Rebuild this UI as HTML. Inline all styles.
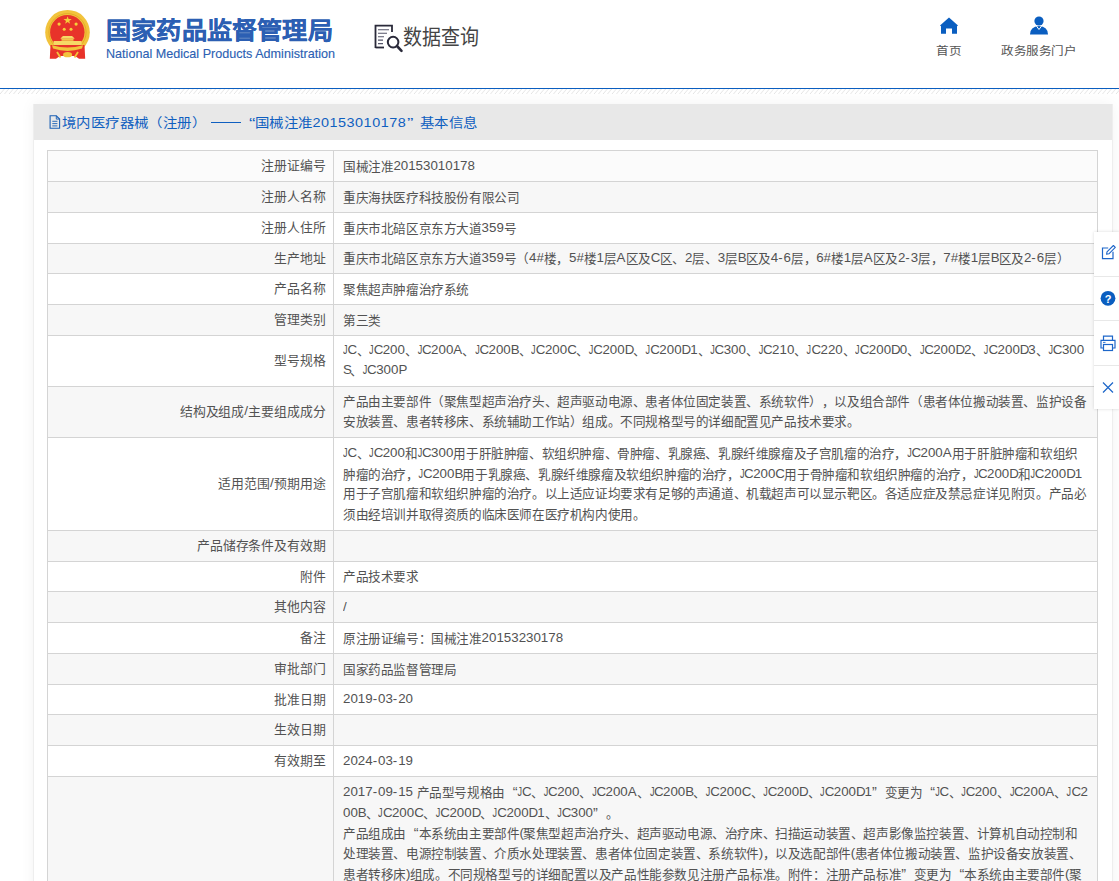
<!DOCTYPE html>
<html lang="zh-CN"><head><meta charset="utf-8">
<style>
*{box-sizing:border-box;margin:0;padding:0}
html,body{text-spacing-trim:space-all;width:1119px;height:881px;overflow:hidden;background:#fff;font-family:"Liberation Sans",sans-serif;color:#333;position:relative}
.emb{position:absolute;left:40px;top:5px;width:60px;height:60px}
.t1{position:absolute;left:106px;top:16.6px;font-size:28px;transform:scale(0.9,0.846);transform-origin:left top;font-weight:700;-webkit-text-stroke:0.3px #2c5fb3;color:#2c5fb3;line-height:34px;white-space:nowrap}
.t2{position:absolute;left:106px;-webkit-text-stroke:0.15px #2c5fb3;top:46px;font-size:14px;transform:scale(0.9);transform-origin:left top;color:#2c5fb3;line-height:16px;white-space:nowrap}
.sq{position:absolute;left:370px;top:18px;width:40px;height:40px}
.sqt{position:absolute;left:403px;top:20.6px;font-size:19px;transform:scaleY(1.1);transform-origin:left center;color:#444;line-height:32px;white-space:nowrap}
.nav{position:absolute;top:41px;text-align:left;font-size:14px;transform:scale(0.9,0.81);transform-origin:left top;color:#555;line-height:18px;white-space:nowrap}
.navi{position:absolute;top:14px}
.line{position:absolute;left:0;top:88px;width:1119px;height:1.2px;background:#0a5ec0}
.hatch{position:absolute;left:0;top:89px}
.box{position:absolute;left:33px;top:104px;width:1080px;height:800px;background:#fff;box-shadow:0 0 14px rgba(0,0,0,0.05);border-left:1px solid #eee;border-right:1px solid #eee}
.bar{position:absolute;left:0;top:0;width:100%;height:35.5px;background:#e8e8e8;color:#0f5fc0;font-size:13px;line-height:35px;padding-left:15px;white-space:nowrap}
.bt{position:absolute;top:1.3px;font-size:16px;line-height:35px;transform:scale(0.9,0.8);transform-origin:left center}
.dash{position:absolute;left:177px;top:18px;width:30px;height:1px;background:#0f5fc0}
.tbl{position:absolute;left:0;top:0;width:1119px;height:881px}
.r{position:absolute;left:47px;width:1051px;border:1px solid #d4d4d4;border-bottom:0;display:flex;align-items:center;font-size:14px;color:#525252;line-height:22.67px}
.lb{width:286px;flex-shrink:0;text-align:right;padding-right:9px;white-space:nowrap;transform:scale(0.92,0.9);transform-origin:right center;position:relative;top:-1px}
.vl{margin-left:8.5px;position:relative;top:-0.45px;white-space:nowrap;transform:scale(0.9);transform-origin:left center}
.vline{position:absolute;left:333px;top:150px;width:1px;height:731px;background:#d4d4d4}
.tool{position:absolute;left:1094px;top:232px;width:26px;height:177px;background:#fff;box-shadow:0 0 3px rgba(0,0,0,0.15)}
.tb{height:44px;border-bottom:1px solid #e8e8e8;position:relative}
.tb.last{border-bottom:0}
.tb svg{position:absolute;left:0;top:0}
.L{font-size:14.8px;vertical-align:1.1px;line-height:1px}
i{font-style:normal}
.qo,.qc{display:inline-block;width:14px;font-weight:normal;font-size:16px;line-height:10px}
.qo{text-align:right}
.qc{text-align:left}
.j{display:inline-block;transform:scaleX(0.68);transform-origin:left center;margin-right:-2.45px}

</style></head><body>
<svg class="emb" viewBox="0 0 60 60" width="60" height="60">
 <circle cx="27.5" cy="27.2" r="22.3" fill="#f2c33c"/>
 <circle cx="27.5" cy="27.2" r="18.6" fill="none" stroke="#e0a523" stroke-width="0.8"/>
 <circle cx="27.3" cy="27.2" r="17.2" fill="#e8332a"/>
 <polygon points="27.6,11.2 28.6,14.1 31.7,14.1 29.2,15.9 30.1,18.8 27.6,17 25.1,18.8 26,15.9 23.5,14.1 26.6,14.1" fill="#f4d03a"/>
 <circle cx="19.1" cy="19.1" r="1.6" fill="#f4d03a"/><circle cx="36.1" cy="19.1" r="1.6" fill="#f4d03a"/>
 <circle cx="24.2" cy="24.2" r="1.5" fill="#f4d03a"/><circle cx="31" cy="24.2" r="1.5" fill="#f4d03a"/>
 <path d="M20.4 33.8 Q22 31.5 23 31 H32 Q33 31.5 34.7 33.8 Z" fill="#f6d866"/>
 <rect x="21.5" y="33.8" width="12" height="2" fill="#f0c64a"/>
 <rect x="13.6" y="36" width="28" height="4.2" fill="#f6d866"/>
 <path d="M10.5 40 L9.8 53.8 H16 L20 51 H35 L39 53.8 H45.2 L44.5 40 Z" fill="#e8332a"/>
 <path d="M12 40.2 Q27.5 45 43 40.2 L42 43.6 Q27.5 48.5 13 43.6 Z" fill="#f2c33c"/>
 <path d="M17 47 L20.5 52.5 M38 47 L34.5 52.5" stroke="#f2c33c" stroke-width="1.8"/>
 <ellipse cx="27.6" cy="49.7" rx="4.5" ry="2.6" fill="#f2c33c"/>
</svg>
<div class="t1">国家药品监督管理局</div>
<div class="t2">National Medical Products Administration</div>
<svg class="sq" viewBox="0 0 40 40" width="40" height="40">
 <path d="M5.5 30 V7.7 H22 V14" fill="none" stroke="#2a2a3a" stroke-width="1.8"/>
 <path d="M5.5 29.5 H14" fill="none" stroke="#2a2a3a" stroke-width="1.8"/>
 <path d="M8 11.8 H19 M8 15.2 H17 M8 18.7 H14 M8 22.1 H13 M8 25.6 H13" stroke="#55556a" stroke-width="1.1"/>
 <circle cx="23.1" cy="24.1" r="5.3" fill="none" stroke="#2a2a3a" stroke-width="2"/>
 <path d="M27 28 L31.5 32.8" stroke="#2a2a3a" stroke-width="2.6" stroke-linecap="round"/>
</svg>
<div class="sqt">数据查询</div>
<svg class="navi" style="left:938px" width="22" height="22" viewBox="0 0 22 22">
 <path d="M2 11.5 L11 3.5 L20 11.5 L19 12.2 V19.7 H14 V14.5 H8 V19.7 H3 V12.2 Z" fill="#0a5ec0"/>
</svg>
<div class="nav" style="left:936px;top:43.6px">首页</div>
<svg class="navi" style="left:1028px" width="22" height="22" viewBox="0 0 22 22">
 <circle cx="11" cy="7" r="4.6" fill="#0a5ec0"/>
 <path d="M2 20.6 Q2 12.5 11 12 Q20 12.5 20 20.6 Z" fill="#0a5ec0"/>
 <path d="M8.5 12.2 L11 15.5 L13.5 12.2" fill="none" stroke="#fff" stroke-width="1"/>
</svg>
<div class="nav" style="left:1001px;top:43.6px">政务服务门户</div>
<div class="line"></div>
<svg class="hatch" width="1119" height="6" viewBox="0 0 1119 6"><defs><pattern id="hp" width="4.5" height="6" patternUnits="userSpaceOnUse"><path d="M0 5 L4.2 0" stroke="#d6d6d6" stroke-width="0.7"/><path d="M4.5 5 L8.7 0" stroke="#d6d6d6" stroke-width="0.7"/><path d="M-4.5 5 L-0.3 0" stroke="#d6d6d6" stroke-width="0.7"/></pattern></defs><rect width="1119" height="6" fill="url(#hp)"/></svg>
<div class="box">
 <div class="bar"><svg style="position:absolute;left:15px;top:11px" width="12" height="14" viewBox="0 0 12 14"><path d="M1.1 0.8 H7.3 L10.6 4.1 V13.2 H1.1 Z" fill="none" stroke="#1a5fb4" stroke-width="1.1"/><path d="M7.3 0.8 V4.1 H10.6" fill="none" stroke="#1a5fb4" stroke-width="0.9"/><path d="M3.3 6.3 H8.4 M3.3 8.6 H8.4 M3.3 10.9 H8.4" stroke="#1a5fb4" stroke-width="0.9"/></svg><span class="bt" style="left:28px">境内医疗器械（注册）</span><span class="dash"></span><span class="bt" style="left:214.5px;transform:scale(1.2,0.8)">“</span><span class="bt" style="left:220.5px">国械注准<span style="letter-spacing:0.55px">20153010178</span></span><span class="bt" style="left:373px;transform:scale(1.2,0.8)">”</span><span class="bt" style="left:386px">基本信息</span></div>
</div>

<div class="tbl">
<div class="r" style="top:150px;height:32px;background:#fbfbfb"><div class="lb">注册证编号</div><div class="vl"><span class="ln">国械注准<span class="L">20153010178</span></span></div></div>
<div class="r" style="top:181px;height:32px;background:#f7f7f7"><div class="lb">注册人名称</div><div class="vl"><span class="ln">重庆海扶医疗科技股份有限公司</span></div></div>
<div class="r" style="top:212px;height:32px;background:#fff"><div class="lb">注册人住所</div><div class="vl"><span class="ln">重庆市北碚区京东方大道<span class="L">359</span>号</span></div></div>
<div class="r" style="top:243px;height:31px;background:#f7f7f7"><div class="lb">生产地址</div><div class="vl"><span class="ln">重庆市北碚区京东方大道<span class="L">359</span>号（<span class="L">4#</span>楼，<span class="L">5#</span>楼<span class="L">1</span>层<span class="L"><i style="letter-spacing:0.2px">A</i></span>区及<span class="L"><i style="letter-spacing:-0.6px">C</i></span>区、<span class="L">2</span>层、<span class="L">3</span>层<span class="L"><i style="letter-spacing:-1.0px">B</i></span>区及<span class="L">4<i style="letter-spacing:1.0px">-</i>6</span>层，<span class="L">6#</span>楼<span class="L">1</span>层<span class="L"><i style="letter-spacing:0.2px">A</i></span>区及<span class="L">2<i style="letter-spacing:1.0px">-</i>3</span>层，<span class="L">7#</span>楼<span class="L">1</span>层<span class="L"><i style="letter-spacing:-1.0px">B</i></span>区及<span class="L">2<i style="letter-spacing:1.0px">-</i>6</span>层）</span></div></div>
<div class="r" style="top:273px;height:32px;background:#fff"><div class="lb">产品名称</div><div class="vl"><span class="ln">聚焦超声肿瘤治疗系统</span></div></div>
<div class="r" style="top:304px;height:32px;background:#f7f7f7"><div class="lb">管理类别</div><div class="vl"><span class="ln">第三类</span></div></div>
<div class="r" style="top:335px;height:52px;background:#fff"><div class="lb">型号规格</div><div class="vl"><span class="ln"><span class="L"><i class="j">J</i><i style="letter-spacing:-0.6px">C</i></span>、<span class="L"><i class="j">J</i><i style="letter-spacing:-0.6px">C</i>200</span>、<span class="L"><i class="j">J</i><i style="letter-spacing:-0.6px">C</i>200<i style="letter-spacing:0.2px">A</i></span>、<span class="L"><i class="j">J</i><i style="letter-spacing:-0.6px">C</i>200<i style="letter-spacing:-1.0px">B</i></span>、<span class="L"><i class="j">J</i><i style="letter-spacing:-0.6px">C</i>200<i style="letter-spacing:-0.6px">C</i></span>、<span class="L"><i class="j">J</i><i style="letter-spacing:-0.6px">C</i>200<i style="letter-spacing:-1.2px">D</i></span>、<span class="L"><i class="j">J</i><i style="letter-spacing:-0.6px">C</i>200<i style="letter-spacing:-1.2px">D</i>1</span>、<span class="L"><i class="j">J</i><i style="letter-spacing:-0.6px">C</i>300</span>、<span class="L"><i class="j">J</i><i style="letter-spacing:-0.6px">C</i>210</span>、<span class="L"><i class="j">J</i><i style="letter-spacing:-0.6px">C</i>220</span>、<span class="L"><i class="j">J</i><i style="letter-spacing:-0.6px">C</i>200<i style="letter-spacing:-1.2px">D</i>0</span>、<span class="L"><i class="j">J</i><i style="letter-spacing:-0.6px">C</i>200<i style="letter-spacing:-1.2px">D</i>2</span>、<span class="L"><i class="j">J</i><i style="letter-spacing:-0.6px">C</i>200<i style="letter-spacing:-1.2px">D</i>3</span>、<span class="L"><i class="j">J</i><i style="letter-spacing:-0.6px">C</i>300</span></span><br><span class="ln"><span class="L"><i style="letter-spacing:-2.1px">S</i></span>、<span class="L"><i class="j">J</i><i style="letter-spacing:-0.6px">C</i>300<i style="letter-spacing:-1.7px">P</i></span></span></div></div>
<div class="r" style="top:386px;height:52px;background:#f7f7f7"><div class="lb">结构及组成<span class="L"><i style="letter-spacing:0.5px">/</i></span>主要组成成分</div><div class="vl"><span class="ln">产品由主要部件（聚焦型超声治疗头、超声驱动电源、患者体位固定装置、系统软件），以及组合部件（患者体位搬动装置、监护设备</span><br><span class="ln">安放装置、患者转移床、系统辅助工作站）组成。不同规格型号的详细配置见产品技术要求。</span></div></div>
<div class="r" style="top:437px;height:94px;background:#fff"><div class="lb">适用范围<span class="L"><i style="letter-spacing:0.5px">/</i></span>预期用途</div><div class="vl"><span class="ln"><span class="L"><i class="j">J</i><i style="letter-spacing:-0.6px">C</i></span>、<span class="L"><i class="j">J</i><i style="letter-spacing:-0.6px">C</i>200</span>和<span class="L"><i class="j">J</i><i style="letter-spacing:-0.6px">C</i>300</span>用于肝脏肿瘤、软组织肿瘤、骨肿瘤、乳腺癌、乳腺纤维腺瘤及子宫肌瘤的治疗，<span class="L"><i class="j">J</i><i style="letter-spacing:-0.6px">C</i>200<i style="letter-spacing:0.2px">A</i></span>用于肝脏肿瘤和软组织</span><br><span class="ln">肿瘤的治疗，<span class="L"><i class="j">J</i><i style="letter-spacing:-0.6px">C</i>200<i style="letter-spacing:-1.0px">B</i></span>用于乳腺癌、乳腺纤维腺瘤及软组织肿瘤的治疗，<span class="L"><i class="j">J</i><i style="letter-spacing:-0.6px">C</i>200<i style="letter-spacing:-0.6px">C</i></span>用于骨肿瘤和软组织肿瘤的治疗，<span class="L"><i class="j">J</i><i style="letter-spacing:-0.6px">C</i>200<i style="letter-spacing:-1.2px">D</i></span>和<span class="L"><i class="j">J</i><i style="letter-spacing:-0.6px">C</i>200<i style="letter-spacing:-1.2px">D</i>1</span></span><br><span class="ln">用于子宫肌瘤和软组织肿瘤的治疗。以上适应证均要求有足够的声通道、机载超声可以显示靶区。各适应症及禁忌症详见附页。产品必</span><br><span class="ln">须由经培训并取得资质的临床医师在医疗机构内使用。</span></div></div>
<div class="r" style="top:530px;height:32px;background:#f7f7f7"><div class="lb">产品储存条件及有效期</div><div class="vl"><span class="ln"></span></div></div>
<div class="r" style="top:561px;height:31px;background:#fff"><div class="lb">附件</div><div class="vl"><span class="ln">产品技术要求</span></div></div>
<div class="r" style="top:591px;height:32px;background:#f7f7f7"><div class="lb">其他内容</div><div class="vl"><span class="ln"><span class="L"><i style="letter-spacing:0.5px">/</i></span></span></div></div>
<div class="r" style="top:622px;height:32px;background:#fff"><div class="lb">备注</div><div class="vl"><span class="ln">原注册证编号：国械注准<span class="L">20153230178</span></span></div></div>
<div class="r" style="top:653px;height:32px;background:#f7f7f7"><div class="lb">审批部门</div><div class="vl"><span class="ln">国家药品监督管理局</span></div></div>
<div class="r" style="top:684px;height:31px;background:#fff"><div class="lb">批准日期</div><div class="vl"><span class="ln"><span class="L">2019<i style="letter-spacing:1.0px">-</i>03<i style="letter-spacing:1.0px">-</i>20</span></span></div></div>
<div class="r" style="top:714px;height:32px;background:#f7f7f7"><div class="lb">生效日期</div><div class="vl"><span class="ln"></span></div></div>
<div class="r" style="top:745px;height:32px;background:#fff"><div class="lb">有效期至</div><div class="vl"><span class="ln"><span class="L">2024<i style="letter-spacing:1.0px">-</i>03<i style="letter-spacing:1.0px">-</i>19</span></span></div></div>
<div class="r" style="top:776px;height:145px;background:#f7f7f7;align-items:flex-start"><div class="lb" style="visibility:hidden">变更情况</div><div class="vl" style="margin-top:-0.5px"><span class="ln"><span class="L">2017<i style="letter-spacing:1.0px">-</i>09<i style="letter-spacing:1.0px">-</i>15 </span>产品型号规格由<b class="qo">“</b><span class="L"><i class="j">J</i><i style="letter-spacing:-0.6px">C</i></span>、<span class="L"><i class="j">J</i><i style="letter-spacing:-0.6px">C</i>200</span>、<span class="L"><i class="j">J</i><i style="letter-spacing:-0.6px">C</i>200<i style="letter-spacing:0.2px">A</i></span>、<span class="L"><i class="j">J</i><i style="letter-spacing:-0.6px">C</i>200<i style="letter-spacing:-1.0px">B</i></span>、<span class="L"><i class="j">J</i><i style="letter-spacing:-0.6px">C</i>200<i style="letter-spacing:-0.6px">C</i></span>、<span class="L"><i class="j">J</i><i style="letter-spacing:-0.6px">C</i>200<i style="letter-spacing:-1.2px">D</i></span>、<span class="L"><i class="j">J</i><i style="letter-spacing:-0.6px">C</i>200<i style="letter-spacing:-1.2px">D</i>1</span><b class="qc">”</b>变更为<b class="qo">“</b><span class="L"><i class="j">J</i><i style="letter-spacing:-0.6px">C</i></span>、<span class="L"><i class="j">J</i><i style="letter-spacing:-0.6px">C</i>200</span>、<span class="L"><i class="j">J</i><i style="letter-spacing:-0.6px">C</i>200<i style="letter-spacing:0.2px">A</i></span>、<span class="L"><i class="j">J</i><i style="letter-spacing:-0.6px">C</i>2</span></span><br><span class="ln"><span class="L">00<i style="letter-spacing:-1.0px">B</i></span>、<span class="L"><i class="j">J</i><i style="letter-spacing:-0.6px">C</i>200<i style="letter-spacing:-0.6px">C</i></span>、<span class="L"><i class="j">J</i><i style="letter-spacing:-0.6px">C</i>200<i style="letter-spacing:-1.2px">D</i></span>、<span class="L"><i class="j">J</i><i style="letter-spacing:-0.6px">C</i>200<i style="letter-spacing:-1.2px">D</i>1</span>、<span class="L"><i class="j">J</i><i style="letter-spacing:-0.6px">C</i>300</span><b class="qc">”</b>。</span><br><span class="ln">产品组成由<b class="qo">“</b>本系统由主要部件<span class="L"><i style="letter-spacing:-0.7px">(</i></span>聚焦型超声治疗头、超声驱动电源、治疗床、扫描运动装置、超声影像监控装置、计算机自动控制和</span><br><span class="ln">处理装置、电源控制装置、介质水处理装置、患者体位固定装置、系统软件<span class="L"><i style="letter-spacing:-0.7px">)</i></span>，以及选配部件<span class="L"><i style="letter-spacing:-0.7px">(</i></span>患者体位搬动装置、监护设备安放装置、</span><br><span class="ln">患者转移床<span class="L"><i style="letter-spacing:-0.7px">)</i></span>组成。不同规格型号的详细配置以及产品性能参数见注册产品标准。附件：注册产品标准<b class="qc">”</b>变更为<b class="qo">“</b>本系统由主要部件<span class="L"><i style="letter-spacing:-0.7px">(</i></span>聚</span><br><span class="ln">处理装置、电源控制装置、介质水处理装置、患者体位固定装置、系统软件<span class="L"><i style="letter-spacing:-0.7px">)</i></span>，以及选配部件<span class="L"><i style="letter-spacing:-0.7px">(</i></span>患者体位搬动装置、监护设备安放装置、</span></div></div>
<div class="vline"></div>
</div>
<div class="tool">
 <div class="tb" style="height:45px"><svg width="26" height="45" viewBox="0 0 26 45"><path d="M19 19.8 V26.7 H8.5 V16 H14.2" fill="none" stroke="#1d66c9" stroke-width="1.2"/><path d="M12.6 22.3 L13 19.9 L19.4 13.5 L21.3 15.4 L14.9 21.8 Z" fill="none" stroke="#1d66c9" stroke-width="1.1" stroke-linejoin="round"/></svg></div>
 <div class="tb" style="height:44px"><svg width="26" height="44" viewBox="0 0 26 44"><circle cx="14" cy="21.3" r="7.4" fill="#0a5ec0"/><text x="14" y="25.5" font-size="11" font-weight="bold" fill="#fff" text-anchor="middle" font-family="Liberation Sans">?</text></svg></div>
 <div class="tb" style="height:45px"><svg width="26" height="45" viewBox="0 0 26 45"><path d="M9.5 19 V15.2 H18.5 V19" fill="none" stroke="#1d66c9" stroke-width="1.2"/><path d="M9.5 27 H7 V19.3 H21 V27 H18.5" fill="none" stroke="#1d66c9" stroke-width="1.2"/><rect x="9.5" y="23.5" width="9" height="6" fill="none" stroke="#1d66c9" stroke-width="1.2"/><line x1="9" y1="21.4" x2="11.5" y2="21.4" stroke="#1d66c9" stroke-width="0.9"/></svg></div>
 <div class="tb last" style="height:43px"><svg width="26" height="43" viewBox="0 0 26 43"><path d="M9 16.5 L19 26.5 M19 16.5 L9 26.5" stroke="#1d66c9" stroke-width="1.2"/></svg></div>
</div>
</body></html>
